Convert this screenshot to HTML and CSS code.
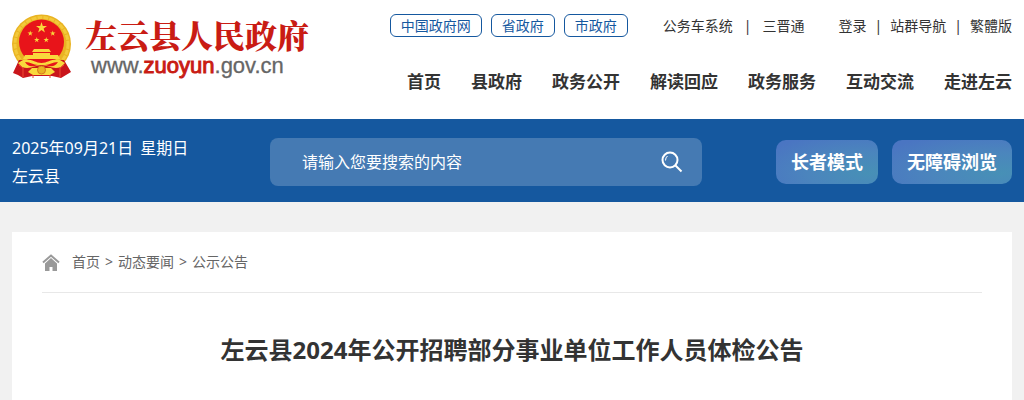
FILE: index.html
```
<!DOCTYPE html>
<html lang="zh-CN">
<head>
<meta charset="utf-8">
<meta name="viewport" content="width=device-width, initial-scale=1">
<title>左云县2024年公开招聘部分事业单位工作人员体检公告</title>
<link rel="stylesheet" href="styles.css">
</head>
<body>
<header class="header">
  <a class="brand" href="#">
    <svg class="emblem" viewBox="0 0 60 64" aria-hidden="true">
      <circle cx="29.500" cy="30" r="29.500" fill="#e9b322"/>
      <circle cx="29.500" cy="30" r="26.500" fill="none" stroke="#f3c93a" stroke-width="3" stroke-dasharray="5 1"/>
      <path d="M7 46l45 0 7 12-5 3-5 3-9-2H20l-9 2-5-3-5-2z" fill="#c9151b"/>
      <circle cx="29.500" cy="28" r="22.500" fill="#e8141a"/>
      <g fill="#f9d83c">
        <path id="star" d="M29.500 8l1.300 3.900h4.200l-3.400 2.500 1.300 4-3.400-2.500-3.400 2.500 1.300-4-3.400-2.500h4.200z"/>
        <use href="#star" transform="translate(3.500 12.500) scale(.5)"/>
        <use href="#star" transform="translate(26 12.500) scale(.5)"/>
        <use href="#star" transform="translate(10 19) scale(.5)"/>
        <use href="#star" transform="translate(19.500 19) scale(.5)"/>
        <path d="M22 35h15l2 3H20zM21 39h17v2h8l2 4H11l2-4h8z"/>
        <path d="M11 46c8-2 12 3 18.500 3S40 44 48 46l5 3-4 4c-8 3-13-2-19.500-2S18 56 10 53l-4-4z"/>
        <path d="M20 54h19l4 4-5 3H21l-5-3z"/>
      </g>
      <path d="M13 48c6 0 8 3 13 3-6 2-10 2-13-3zM46 48c-6 0-8 3-13 3 6 2 10 2 13-3z" fill="#e8141a"/>
      <circle cx="29.500" cy="56" r="4" fill="#e9b322" stroke="#d9771f"/>
      <path d="M7 51l4 3v9M52 51l-4 3v9M21 61v3M38 61v3" fill="none" stroke="#ee4b32"/>
    </svg>
    <span class="brand-text">
      <span class="brand-name">左云县人民政府</span>
      <span class="brand-url">www.<span class="brand-host">zuoyun</span>.gov.cn</span>
    </span>
  </a>
  <div class="header-right">
    <div class="top-links">
      <a class="pill" href="#">中国政府网</a>
      <a class="pill" href="#">省政府</a>
      <a class="pill" href="#">市政府</a>
      <div class="services"><a href="#">公务车系统</a><span>|</span><a href="#">三晋通</a></div>
      <div class="account"><a href="#">登录</a><span>|</span><a href="#">站群导航</a><span>|</span><a href="#">繁體版</a></div>
    </div>
    <nav class="nav">
      <a href="#">首页</a>
      <a href="#">县政府</a>
      <a href="#">政务公开</a>
      <a href="#">解读回应</a>
      <a href="#">政务服务</a>
      <a href="#">互动交流</a>
      <a href="#">走进左云</a>
    </nav>
  </div>
</header>
<section class="band">
  <div class="date"><div class="today"><span>2025年09月21日</span><span>星期日</span></div><div>左云县</div></div>
  <form class="search">
    <input type="text" aria-label="搜索" placeholder="请输入您要搜索的内容">
    <button type="button" aria-label="搜索">
      <svg viewBox="0 0 22 22" aria-hidden="true"><g fill="none" stroke="#fff" stroke-width="2"><circle cx="9" cy="9" r="7.500"/><path d="M14.500 14.500l6 6"/><path d="M4.500 9.500q0-3 2-4.500" stroke-width="1"/></g></svg>
    </button>
  </form>
  <div class="modes">
    <button class="mode" type="button">长者模式</button>
    <button class="mode" type="button">无障碍浏览</button>
  </div>
</section>
<main class="card">
  <nav class="crumbs">
    <svg viewBox="0 0 18 17" aria-hidden="true"><path d="M1 8.500L9 1.500l8 7" fill="none" stroke="#999" stroke-width="2"/><path d="M9 4l6 5.500V17h-4.500v-4h-3v4H3V9.500z" fill="#999"/></svg>
    <div class="trail"><a href="#">首页</a><span>&gt;</span><a href="#">动态要闻</a><span>&gt;</span><a href="#">公示公告</a></div>
  </nav>
  <h1 class="title">左云县2024年公开招聘部分事业单位工作人员体检公告</h1>
</main>
</body>
</html>
```
FILE: styles.css
```
* { box-sizing: border-box; }
body {
  margin: 0;
  background: #f1f1f1;
  color: #333;
  font: 14px/22px "Noto Sans", "Noto Sans CJK SC", sans-serif;
}
a { color: inherit; text-decoration: none; }
button, input { font: inherit; color: inherit; border: 0; background: none; padding: 0; }

.header {
  display: flex;
  justify-content: space-between;
  align-items: flex-start;
  padding: 14px 12px 23px;
  background: #fff;
}
.brand { display: flex; gap: 13px; }
.emblem { width: 60px; height: 64px; }
.brand-text { display: flex; flex-direction: column; }
.brand-name {
  color: #c91c14;
  font: 900 32px/40px "Noto Serif CJK SC", "Noto Sans CJK SC", serif;
}
.brand-url {
  padding-left: 6px;
  color: #666;
  font: 22px/24px "Liberation Sans", Arial, sans-serif;
  -webkit-text-stroke: 0.3px currentColor;
}
.brand-host { color: #c91c14; -webkit-text-stroke: 1px currentColor; }
.header-right { display: flex; flex-direction: column; align-items: flex-end; gap: 30px; }
.top-links { display: flex; align-items: center; gap: 9px; }
.pill {
  padding: 0 10px;
  border: 1px solid #15589f;
  border-radius: 6px;
  color: #15589f;
  line-height: 21px;
}
.services, .account { display: flex; }
.services { gap: 11px; margin-left: 26px; }
.account { gap: 8px; margin-left: 25px; }
.nav { display: flex; gap: 30px; font-size: 17px; line-height: 29px; font-weight: 700; }

.band {
  display: flex;
  align-items: center;
  height: 83px;
  padding: 3px 12px 0;
  background: #15589f;
  color: #fff;
  font-size: 16px;
}
.date { flex: 0 0 258px; line-height: 28px; }
.today { display: flex; gap: 7px; }
.search {
  display: flex;
  align-items: center;
  flex: 0 1 432px;
  height: 48px;
  padding: 0 19px 0 32px;
  border-radius: 8px;
  background: #457ab3;
}
.search input { flex: 1; min-width: 0; height: 48px; outline: 0; }
.search input::placeholder { color: #fff; opacity: 1; }
.search button { width: 22px; height: 22px; }
.search svg { display: block; width: 22px; height: 22px; }
.modes { display: flex; gap: 14px; margin-left: auto; }
.mode {
  height: 44px;
  padding: 0 15px;
  border-radius: 10px;
  background: radial-gradient(ellipse at 90% 75%, #4790b6, #4b85bd 45%, #4a75c2 90%);
  font-size: 18px;
  font-weight: 700;
  white-space: nowrap;
}

.card { margin: 30px 12px 0; padding: 0 30px 30px; min-height: 180px; background: #fff; }
.crumbs {
  display: flex;
  align-items: center;
  gap: 12px;
  height: 61px;
  border-bottom: 1px solid #e8e8e8;
  color: #666;
}
.crumbs svg { width: 18px; height: 17px; }
.trail { display: flex; gap: 5px; }
.title { margin: 39px 0 0; font-size: 24px; line-height: 36px; text-align: center; }
```
